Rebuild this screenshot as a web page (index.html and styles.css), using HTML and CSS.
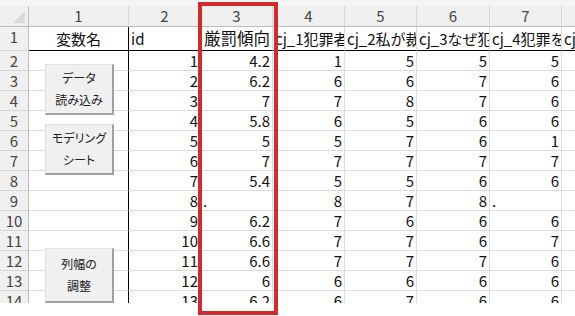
FILE: index.html
```html
<!DOCTYPE html>
<html lang="ja">
<head>
    <meta charset="UTF-8">
    <title>厳罰傾向データ</title>
    <link rel="stylesheet" href="styles.css">
</head>
<body>

<div class="window">
    <div class="sheet">
        <div class="top-strip"></div>
        <div class="grid">
            <!-- 列見出し -->
            <div class="corner"></div>
            <div class="colhead">1</div>
            <div class="colhead">2</div>
            <div class="colhead">3</div>
            <div class="colhead">4</div>
            <div class="colhead">5</div>
            <div class="colhead">6</div>
            <div class="colhead">7</div>
            <div class="colhead">8</div>

            <!-- 変数名の行 -->
            <div class="rowhead">1</div>
            <div class="cell c1 r1 mid">変数名</div>
            <div class="cell r1">id</div>
            <div class="cell r1 wide">厳罰傾向</div>
            <div class="cell r1">cj_1犯罪者</div>
            <div class="cell r1">cj_2私が裁</div>
            <div class="cell r1">cj_3なぜ犯罪</div>
            <div class="cell r1">cj_4犯罪を犯</div>
            <div class="cell r1">cj_5犯罪</div>

            <div class="rowhead">2</div><div class="cell c1"></div>
            <div class="cell num">1</div><div class="cell num">4.2</div><div class="cell num">1</div><div class="cell num">5</div><div class="cell num">5</div><div class="cell num">5</div><div class="cell"></div>

            <div class="rowhead">3</div><div class="cell c1"></div>
            <div class="cell num">2</div><div class="cell num">6.2</div><div class="cell num">6</div><div class="cell num">6</div><div class="cell num">7</div><div class="cell num">6</div><div class="cell"></div>

            <div class="rowhead">4</div><div class="cell c1"></div>
            <div class="cell num">3</div><div class="cell num">7</div><div class="cell num">7</div><div class="cell num">8</div><div class="cell num">7</div><div class="cell num">6</div><div class="cell"></div>

            <div class="rowhead">5</div><div class="cell c1"></div>
            <div class="cell num">4</div><div class="cell num">5.8</div><div class="cell num">6</div><div class="cell num">5</div><div class="cell num">6</div><div class="cell num">6</div><div class="cell"></div>

            <div class="rowhead">6</div><div class="cell c1"></div>
            <div class="cell num">5</div><div class="cell num">5</div><div class="cell num">5</div><div class="cell num">7</div><div class="cell num">6</div><div class="cell num">1</div><div class="cell"></div>

            <div class="rowhead">7</div><div class="cell c1"></div>
            <div class="cell num">6</div><div class="cell num">7</div><div class="cell num">7</div><div class="cell num">7</div><div class="cell num">7</div><div class="cell num">7</div><div class="cell"></div>

            <div class="rowhead">8</div><div class="cell c1"></div>
            <div class="cell num">7</div><div class="cell num">5.4</div><div class="cell num">5</div><div class="cell num">5</div><div class="cell num">6</div><div class="cell num">6</div><div class="cell"></div>

            <div class="rowhead">9</div><div class="cell c1"></div>
            <div class="cell num">8</div><div class="cell">.</div><div class="cell num">8</div><div class="cell num">7</div><div class="cell num">8</div><div class="cell">.</div><div class="cell"></div>

            <div class="rowhead">10</div><div class="cell c1"></div>
            <div class="cell num">9</div><div class="cell num">6.2</div><div class="cell num">7</div><div class="cell num">6</div><div class="cell num">6</div><div class="cell num">6</div><div class="cell"></div>

            <div class="rowhead">11</div><div class="cell c1"></div>
            <div class="cell num">10</div><div class="cell num">6.6</div><div class="cell num">7</div><div class="cell num">7</div><div class="cell num">6</div><div class="cell num">7</div><div class="cell"></div>

            <div class="rowhead">12</div><div class="cell c1"></div>
            <div class="cell num">11</div><div class="cell num">6.6</div><div class="cell num">7</div><div class="cell num">7</div><div class="cell num">7</div><div class="cell num">6</div><div class="cell"></div>

            <div class="rowhead">13</div><div class="cell c1"></div>
            <div class="cell num">12</div><div class="cell num">6</div><div class="cell num">6</div><div class="cell num">6</div><div class="cell num">6</div><div class="cell num">6</div><div class="cell"></div>

            <div class="rowhead">14</div><div class="cell c1"></div>
            <div class="cell num">13</div><div class="cell num">6.2</div><div class="cell num">6</div><div class="cell num">7</div><div class="cell num">6</div><div class="cell num">6</div><div class="cell"></div>
        </div>

        <!-- シート上のボタン -->
        <button class="btn btn-load"><span>データ</span><span>読み込み</span></button>
        <button class="btn btn-model"><span>モデリング</span><span>シート</span></button>
        <button class="btn btn-width"><span>列幅の</span><span>調整</span></button>
    </div>

    <!-- 注目する列の枠 -->
    <div class="highlight"></div>
</div>

</body>
</html>
```

FILE: styles.css
```css
body {
    margin: 0;
    background-color: #fff;
    font-family: "Noto Sans CJK JP", "Noto Sans", sans-serif;
}

.window {
    position: relative;
    width: 575px;
    height: 316px;
    overflow: hidden;
}

.sheet {
    position: relative;
    width: 575px;
    height: 303px;
    overflow: hidden;
    background-color: #fff;
}

.top-strip {
    height: 6px;
    background-color: #f5f5f5;
}

.grid {
    display: grid;
    grid-template-columns: 29px 100px 72px 72px 72px 72px 73px 72px 72px;
    grid-template-rows: 21px 24px;
    grid-auto-rows: 20px;
    width: max-content;
}

.grid > div {
    box-sizing: border-box;
    border-right: 1px solid #dcdcdc;
    border-bottom: 1px solid #dcdcdc;
    padding: 0 2px;
    font-size: 15px;
    line-height: 19px;
    white-space: nowrap;
    overflow: hidden;
    color: #111;
}

.grid > .corner {
    position: relative;
    background-color: #f0f0f0;
    border-right-color: #bcbcbc;
    border-bottom-color: #bcbcbc;
}

.corner::after {
    content: "";
    position: absolute;
    right: 3px;
    bottom: 3px;
    border-left: 12px solid transparent;
    border-bottom: 12px solid #dadada;
}

.grid > .colhead {
    background-color: #f0f0f0;
    color: #444;
    text-align: center;
    line-height: 20px;
    border-right-color: #d6d6d6;
    border-bottom-color: #bcbcbc;
}

.grid > .rowhead {
    background-color: #f0f0f0;
    color: #444;
    text-align: center;
    padding: 0;
    border-right-color: #bcbcbc;
    border-bottom-color: #d6d6d6;
}

.grid > .r1 {
    line-height: 23px;
    border-bottom-color: #000;
}

.grid > .c1 {
    border-right-color: #000;
}

.num {
    text-align: right;
}

.mid {
    text-align: center;
}

.grid > .wide {
    padding-left: 3px;
    font-size: 16.5px;
}

.btn {
    position: absolute;
    left: 45px;
    width: 69px;
    box-sizing: border-box;
    display: flex;
    flex-direction: column;
    justify-content: center;
    padding: 0;
    background-color: #f0f0f0;
    border: 1px solid #e0e0e0;
    border-right: 2px solid #a0a0a0;
    border-bottom: 2px solid #a0a0a0;
    font-family: inherit;
    font-size: 12px;
    font-feature-settings: "palt";
    line-height: 22px;
    color: #222;
}

.btn-load {
    top: 64px;
    height: 51px;
}

.btn-model {
    top: 124px;
    height: 51px;
}

.btn-width {
    top: 248px;
    height: 55px;
}

.highlight {
    position: absolute;
    left: 198px;
    top: 2px;
    width: 80px;
    height: 313px;
    box-sizing: border-box;
    border: 4px solid #d22b2b;
}
```
